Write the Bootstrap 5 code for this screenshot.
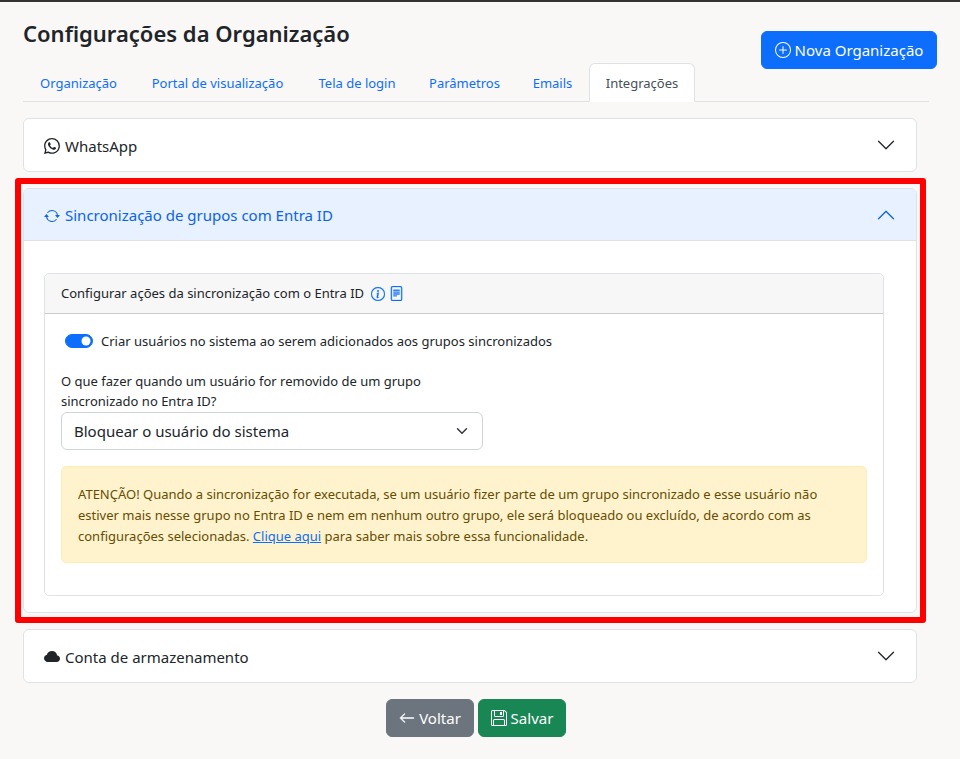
<!DOCTYPE html>
<html lang="pt-BR">
<head>
<meta charset="utf-8">
<title>Configurações da Organização</title>
<link href="https://cdn.jsdelivr.net/npm/bootstrap@5.3.0/dist/css/bootstrap.min.css" rel="stylesheet">
<style>
html,body{height:759px;overflow:hidden}
body{background:#faf8f6;font-family:"Noto Sans","Open Sans",sans-serif;font-size:13px;color:#212529;border-top:2px solid #333;position:relative}
.page-wrap{padding:0 23px}
.head-row{height:61px}
.page-title{font-size:22px;font-weight:600;line-height:1.2;margin:18px 0 0}
.new-btn{font-size:15px;height:38px;width:176px;margin-top:29px;padding:0;display:flex;align-items:center;justify-content:center;gap:4px}
.tabs-bar{width:906px;margin-bottom:16px}
.tabs-bar .nav-link{font-size:13px;padding:10px 0;height:39px;line-height:18px;text-align:center}
.tabs-bar .nav-item:nth-child(1) .nav-link{width:111px}
.tabs-bar .nav-item:nth-child(2) .nav-link{width:167px}
.tabs-bar .nav-item:nth-child(3) .nav-link{width:112px}
.tabs-bar .nav-item:nth-child(4) .nav-link{width:103px}
.tabs-bar .nav-item:nth-child(5) .nav-link{width:73px}
.tabs-bar .nav-item:nth-child(6) .nav-link{width:106px}
.tabs-bar .nav-link.active{background:#fff;color:#495057}
.acc-block{width:894px;background:#fff;border:1px solid #dee2e6;border-radius:6px;margin-bottom:16px}
.acc-head{height:52px;display:flex;align-items:center;justify-content:space-between;padding:0 20px;font-size:15px;background:#fff;border-radius:6px}
.acc-title{display:flex;align-items:center;gap:5px;padding-top:2px}
.acc-open .acc-head{background:#e7f1ff;color:#0c63e4;border-bottom:1px solid #dee2e6;border-radius:5px 5px 0 0}
.acc-body{padding:32px 32px 16px 20px}
.cfg-card{border-color:#dee2e6;border-radius:5px}
.cfg-card .card-header{height:40px;padding:0 16px;display:flex;align-items:center;gap:3px;font-size:13px;background:#f7f7f7}
.cfg-card .card-body{padding:16px}
.hdr-ico{stroke:#0d6efd;stroke-width:.35}
.doc-ico{margin-left:1px}
.sw-row{display:flex;align-items:center;gap:8px;padding-left:4px;height:22px;margin-bottom:18px}
.sw-row .form-check-input{width:28px;height:14px;margin:0;float:none}
.sw-row .form-check{min-height:0;padding:0;margin:0;display:flex}
.sw-row label{padding-top:2px}
.q-label{width:420px;line-height:20px;padding:1px 0;margin-bottom:0;display:block}
.sel-box{width:422px;height:38px;font-size:15px;padding:0 36px 0 12px;border-color:#ced4da;color:#212529}
.warn-box{margin:16px 0;padding:17px 16px 15px;background:#fff3cd;border:1px solid #ffecb5;color:#664d03;line-height:21px;border-radius:5px;font-size:13px}
.warn-box a{color:#0d6efd}
.foot-row{width:906px;display:flex;justify-content:center;gap:4px}
.foot-btn{font-size:15px;height:38px;width:88px;padding:0;display:flex;align-items:center;justify-content:center;gap:4px}
.back-ico{stroke:currentColor;stroke-width:.5}
.mark-frame{position:absolute;left:15px;top:176px;width:911px;height:445px;border:6px solid #f00;border-radius:3px;pointer-events:none}
</style>
</head>
<body>
<div class="page-wrap">
  <div class="head-row d-flex justify-content-between">
    <h1 class="page-title">Configurações da Organização</h1>
    <button type="button" class="btn btn-primary new-btn">
      <svg width="16" height="16" viewBox="0 0 16 16" fill="currentColor"><path d="M8 15A7 7 0 1 1 8 1a7 7 0 0 1 0 14zm0 1A8 8 0 1 0 8 0a8 8 0 0 0 0 16z"/><path d="M8 4a.5.5 0 0 1 .5.5v3h3a.5.5 0 0 1 0 1h-3v3a.5.5 0 0 1-1 0v-3h-3a.5.5 0 0 1 0-1h3v-3A.5.5 0 0 1 8 4z"/></svg>
      Nova Organização
    </button>
  </div>
  <ul class="nav nav-tabs tabs-bar">
    <li class="nav-item"><a class="nav-link" href="#">Organização</a></li>
    <li class="nav-item"><a class="nav-link" href="#">Portal de visualização</a></li>
    <li class="nav-item"><a class="nav-link" href="#">Tela de login</a></li>
    <li class="nav-item"><a class="nav-link" href="#">Parâmetros</a></li>
    <li class="nav-item"><a class="nav-link" href="#">Emails</a></li>
    <li class="nav-item"><a class="nav-link active" href="#">Integrações</a></li>
  </ul>

  <div class="acc-block">
    <div class="acc-head">
      <span class="acc-title">
        <svg width="16" height="16" viewBox="0 0 16 16" fill="currentColor"><path d="M13.601 2.326A7.854 7.854 0 0 0 7.994 0C3.627 0 .068 3.558.064 7.926c0 1.399.366 2.76 1.057 3.965L0 16l4.204-1.102a7.933 7.933 0 0 0 3.79.965h.004c4.368 0 7.926-3.558 7.93-7.93A7.898 7.898 0 0 0 13.6 2.326zM7.994 14.521a6.573 6.573 0 0 1-3.356-.92l-.24-.144-2.494.654.666-2.433-.156-.251a6.56 6.56 0 0 1-1.007-3.505c0-3.626 2.957-6.584 6.591-6.584a6.56 6.56 0 0 1 4.66 1.931 6.557 6.557 0 0 1 1.928 4.66c-.004 3.639-2.961 6.592-6.592 6.592zm3.615-4.934c-.197-.099-1.17-.578-1.353-.646-.182-.065-.315-.099-.445.099-.133.197-.513.646-.627.775-.114.133-.232.148-.43.05-.197-.1-.836-.308-1.592-.985-.59-.525-.985-1.175-1.103-1.372-.114-.198-.011-.304.088-.403.087-.088.197-.232.296-.346.1-.114.133-.198.198-.33.065-.134.034-.248-.015-.347-.05-.099-.445-1.076-.612-1.47-.16-.389-.323-.335-.445-.34-.114-.007-.247-.007-.38-.007a.729.729 0 0 0-.529.247c-.182.198-.691.677-.691 1.654 0 .977.71 1.916.81 2.049.098.133 1.394 2.132 3.383 2.992.47.205.84.326 1.129.418.475.152.904.129 1.246.08.38-.058 1.171-.48 1.338-.943.164-.464.164-.86.114-.943-.049-.084-.182-.133-.38-.232z"/></svg>
        WhatsApp
      </span>
      <svg width="20" height="20" viewBox="0 0 16 16" fill="#212529"><path fill-rule="evenodd" d="M1.646 4.646a.5.5 0 0 1 .708 0L8 10.293l5.646-5.647a.5.5 0 0 1 .708.708l-6 6a.5.5 0 0 1-.708 0l-6-6a.5.5 0 0 1 0-.708z"/></svg>
    </div>
  </div>

  <div class="acc-block acc-open">
    <div class="acc-head">
      <span class="acc-title">
        <svg width="16" height="16" viewBox="0 0 16 16" fill="currentColor"><path d="M11.534 7h3.932a.25.25 0 0 1 .192.41l-1.966 2.36a.25.25 0 0 1-.384 0l-1.966-2.36a.25.25 0 0 1 .192-.41zm-11 2h3.932a.25.25 0 0 0 .192-.41L2.692 6.23a.25.25 0 0 0-.384 0L.342 8.59A.25.25 0 0 0 .534 9z"/><path fill-rule="evenodd" d="M8 3c-1.552 0-2.94.707-3.857 1.818a.5.5 0 1 1-.771-.636A6.002 6.002 0 0 1 13.917 7H12.9A5.002 5.002 0 0 0 8 3zM3.1 9a5.002 5.002 0 0 0 8.757 2.182.5.5 0 1 1 .771.636A6.002 6.002 0 0 1 2.083 9H3.1z"/></svg>
        Sincronização de grupos com Entra ID
      </span>
      <svg width="20" height="20" viewBox="0 0 16 16" fill="#0c63e4"><path fill-rule="evenodd" d="M1.646 11.354a.5.5 0 0 0 .708 0L8 5.707l5.646 5.647a.5.5 0 0 0 .708-.708l-6-6a.5.5 0 0 0-.708 0l-6 6a.5.5 0 0 0 0 .708z"/></svg>
    </div>
    <div class="acc-body">
      <div class="card cfg-card">
        <div class="card-header">
          Configurar ações da sincronização com o Entra ID
          <svg class="ms-1 hdr-ico" width="14" height="14" viewBox="0 0 16 16" fill="#0d6efd"><path d="M8 15A7 7 0 1 1 8 1a7 7 0 0 1 0 14zm0 1A8 8 0 1 0 8 0a8 8 0 0 0 0 16z"/><path d="m8.93 6.588-2.29.287-.082.38.45.083c.294.07.352.176.288.469l-.738 3.468c-.194.897.105 1.319.808 1.319.545 0 1.178-.252 1.465-.598l.088-.416c-.2.176-.492.246-.686.246-.275 0-.375-.193-.304-.533L8.93 6.588zM9 4.5a1 1 0 1 1-2 0 1 1 0 0 1 2 0z"/></svg>
          <svg class="doc-ico hdr-ico" width="15" height="15" viewBox="0 0 16 16" fill="#0d6efd"><path d="M5 4a.5.5 0 0 0 0 1h6a.5.5 0 0 0 0-1H5zm-.5 2.5A.5.5 0 0 1 5 6h6a.5.5 0 0 1 0 1H5a.5.5 0 0 1-.5-.5zM5 8a.5.5 0 0 0 0 1h6a.5.5 0 0 0 0-1H5zm0 2a.5.5 0 0 0 0 1h3a.5.5 0 0 0 0-1H5z"/><path d="M2 2a2 2 0 0 1 2-2h8a2 2 0 0 1 2 2v12a2 2 0 0 1-2 2H4a2 2 0 0 1-2-2V2zm10-1H4a1 1 0 0 0-1 1v12a1 1 0 0 0 1 1h8a1 1 0 0 0 1-1V2a1 1 0 0 0-1-1z"/></svg>
        </div>
        <div class="card-body">
          <div class="sw-row">
            <div class="form-check form-switch"><input class="form-check-input" type="checkbox" role="switch" id="swCriar" checked></div>
            <label for="swCriar">Criar usuários no sistema ao serem adicionados aos grupos sincronizados</label>
          </div>
          <label class="q-label" for="selAcao">O que fazer quando um usuário for removido de um grupo sincronizado no Entra ID?</label>
          <select class="form-select sel-box" id="selAcao"><option>Bloquear o usuário do sistema</option></select>
          <div class="warn-box">ATENÇÃO! Quando a sincronização for executada, se um usuário fizer parte de um grupo sincronizado e esse usuário não estiver mais nesse grupo no Entra ID e nem em nenhum outro grupo, ele será bloqueado ou excluído, de acordo com as configurações selecionadas. <a href="#">Clique aqui</a> para saber mais sobre essa funcionalidade.</div>
        </div>
      </div>
    </div>
  </div>

  <div class="acc-block">
    <div class="acc-head">
      <span class="acc-title">
        <svg width="16" height="16" viewBox="0 0 16 16" fill="currentColor"><path d="M4.406 3.342A5.530 5.530 0 0 1 8 2c2.690 0 4.923 2 5.166 4.579C14.758 6.804 16 8.137 16 9.773 16 11.569 14.502 13 12.687 13H3.781C1.708 13 0 11.366 0 9.318c0-1.763 1.266-3.223 2.942-3.593.143-.863.698-1.723 1.464-2.383z"/></svg>
        Conta de armazenamento
      </span>
      <svg width="20" height="20" viewBox="0 0 16 16" fill="#212529"><path fill-rule="evenodd" d="M1.646 4.646a.5.5 0 0 1 .708 0L8 10.293l5.646-5.647a.5.5 0 0 1 .708.708l-6 6a.5.5 0 0 1-.708 0l-6-6a.5.5 0 0 1 0-.708z"/></svg>
    </div>
  </div>

  <div class="foot-row">
    <button type="button" class="btn btn-secondary foot-btn">
      <svg class="back-ico" width="16" height="16" viewBox="0 0 16 16" fill="currentColor"><path fill-rule="evenodd" d="M15 8a.5.5 0 0 0-.5-.5H2.707l3.147-3.146a.5.5 0 1 0-.708-.708l-4 4a.5.5 0 0 0 0 .708l4 4a.5.5 0 0 0 .708-.708L2.707 8.5H14.500A.5.5 0 0 0 15 8z"/></svg>
      Voltar
    </button>
    <button type="button" class="btn btn-success foot-btn">
      <svg width="16" height="16" viewBox="0 0 16 16" fill="currentColor"><path d="M11 2H9v3h2V2Z"/><path d="M1.500 0h11.586a1.500 1.500 0 0 1 1.060.44l1.415 1.414A1.500 1.500 0 0 1 16 2.914V14.500a1.500 1.500 0 0 1-1.500 1.500h-13A1.500 1.500 0 0 1 0 14.500v-13A1.500 1.500 0 0 1 1.500 0ZM1 1.500v13a.5.5 0 0 0 .5.5H2v-4.500A1.500 1.500 0 0 1 3.500 9h9a1.500 1.500 0 0 1 1.500 1.500V15h.5a.5.5 0 0 0 .5-.5V2.914a.5.5 0 0 0-.146-.353l-1.415-1.415A.5.5 0 0 0 13.086 1H13v4.500A1.500 1.500 0 0 1 11.500 7h-7A1.500 1.500 0 0 1 3 5.500V1H1.500a.5.5 0 0 0-.5.5Zm3 4a.5.5 0 0 0 .5.5h7a.5.5 0 0 0 .5-.5V1H4v4.500ZM3 15h10v-4.500a.5.5 0 0 0-.5-.5h-9a.5.5 0 0 0-.5.5V15Z"/></svg>
      Salvar
    </button>
  </div>
</div>
<div class="mark-frame"></div>
<script src="https://cdn.jsdelivr.net/npm/bootstrap@5.3.0/dist/js/bootstrap.bundle.min.js"></script>
</body>
</html>
